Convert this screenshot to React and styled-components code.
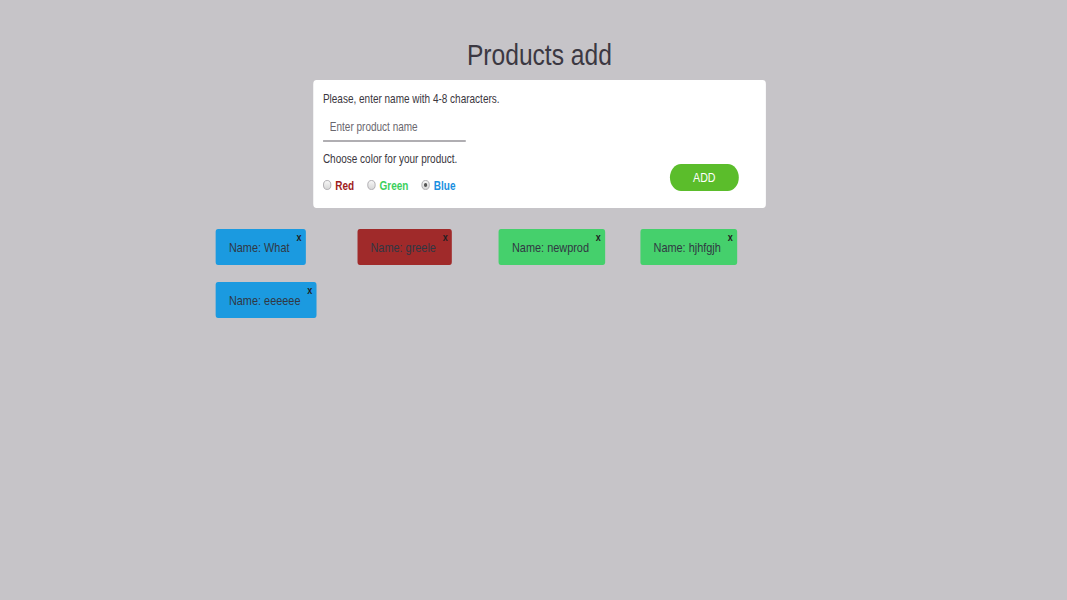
import React, { useState } from "react";
import styled, { createGlobalStyle } from "styled-components";

const Global = createGlobalStyle`
  html, body { margin: 0; padding: 0; background: #c6c4c8; overflow: hidden; }
  body { font-family: "Liberation Sans", Arial, sans-serif; }
  * { box-sizing: border-box; }
`;

/* The reference is horizontally condensed (narrow face); the whole page is
   laid out at natural width and condensed to 82% on the x axis. */
const Page = styled.div`
  width: 1301px;
  min-height: 600px;
  padding: 37px 0 0 14.6px;
  display: flex;
  flex-direction: column;
  align-items: center;
  transform: scaleX(0.82);
  transform-origin: 0 0;
`;

const Title = styled.h1`
  margin: 0 0 7px;
  font-size: 30px;
  line-height: 36px;
  font-weight: 400;
  color: #3b3842;
`;

const Card = styled.form`
  width: 552.4px;
  height: 128px;
  background: #fff;
  border-radius: 4px;
  padding: 12px 33px 15px 12.2px;
  display: flex;
  justify-content: space-between;
  align-items: flex-end;
`;

const FormCol = styled.div`
  display: flex;
  flex-direction: column;
  align-self: stretch;
`;

const Hint = styled.div`
  font-size: 12.2px;
  line-height: 14px;
  color: #3a3640;
  margin-top: ${(p) => p.$mt || 0}px;
`;

const NameInput = styled.input`
  margin-top: 8px;
  width: 174.4px;
  height: 29px;
  border: none;
  border-bottom: 2px solid #b0aeb2;
  outline: none;
  padding: 0 8.5px;
  font-family: inherit;
  font-size: 12.2px;
  color: #333;
  background: transparent;
  &::placeholder { color: #6a676e; }
`;

const RadioRow = styled.div`
  margin-top: 13px;
  display: flex;
  align-items: center;
  gap: 16px;
  height: 14px;
`;

const RadioLabel = styled.label`
  display: flex;
  align-items: center;
  gap: 5px;
  font-size: 12.2px;
  font-weight: 700;
  line-height: 14px;
  color: ${(p) => p.$color};
  cursor: pointer;
`;

const Radio = styled.input`
  appearance: none;
  margin: 0;
  width: 10px;
  height: 10px;
  border-radius: 50%;
  border: 1px solid #a9a7ab;
  background: linear-gradient(#f6f6f6, #d8d8d8);
  position: relative;
  top: -1px;
  &:checked::after {
    content: "";
    position: absolute;
    left: 2px;
    top: 2px;
    width: 4px;
    height: 4px;
    border-radius: 50%;
    background: #555;
  }
`;

const AddButton = styled.button`
  width: 84.1px;
  height: 27px;
  margin-bottom: 2px;
  border: none;
  border-radius: 14px;
  background: #5bbd2b;
  color: #fff;
  font-family: inherit;
  font-size: 13px;
  cursor: pointer;
`;

const Grid = styled.div`
  margin-top: 21px;
  width: 789px;
  display: flex;
  flex-wrap: wrap;
  row-gap: 17px;
`;

const Cell = styled.div`
  width: 172.6px;
`;

const Item = styled.div`
  position: relative;
  display: inline-flex;
  align-items: center;
  height: 36px;
  padding: 0 19.5px 0 15.9px;
  border-radius: 3px;
  background: ${(p) => p.$bg};
  color: #313743;
  font-size: 13.3px;
`;

const Close = styled.span`
  position: absolute;
  top: 3px;
  right: 5px;
  font-size: 11px;
  font-weight: 700;
  line-height: 10px;
  color: #1e1e22;
  cursor: pointer;
`;

const COLORS = { red: "#a02a2a", green: "#45d06c", blue: "#1b9ae0" };

const initial = [
  { name: "What", color: "blue" },
  { name: "greele", color: "red" },
  { name: "newprod", color: "green" },
  { name: "hjhfgjh", color: "green" },
  { name: "eeeeee", color: "blue" },
];

export default function App() {
  const [color, setColor] = useState("blue");
  const [items] = useState(initial);
  return (
    <>
      <Global />
      <Page>
        <Title>Products add</Title>
        <Card onSubmit={(e) => e.preventDefault()}>
          <FormCol>
            <Hint>Please, enter name with 4-8 characters.</Hint>
            <NameInput placeholder="Enter product name" />
            <Hint $mt={10}>Choose color for your product.</Hint>
            <RadioRow>
              <RadioLabel $color="#a01c1c">
                <Radio type="radio" name="c" checked={color === "red"} onChange={() => setColor("red")} />
                Red
              </RadioLabel>
              <RadioLabel $color="#3ccf5c">
                <Radio type="radio" name="c" checked={color === "green"} onChange={() => setColor("green")} />
                Green
              </RadioLabel>
              <RadioLabel $color="#1a8fe0">
                <Radio type="radio" name="c" checked={color === "blue"} onChange={() => setColor("blue")} />
                Blue
              </RadioLabel>
            </RadioRow>
          </FormCol>
          <AddButton type="submit">ADD</AddButton>
        </Card>
        <Grid>
          {items.map((it, i) => (
            <Cell key={i}>
              <Item $bg={COLORS[it.color]}>
                Name: {it.name}
                <Close>x</Close>
              </Item>
            </Cell>
          ))}
        </Grid>
      </Page>
    </>
  );
}
